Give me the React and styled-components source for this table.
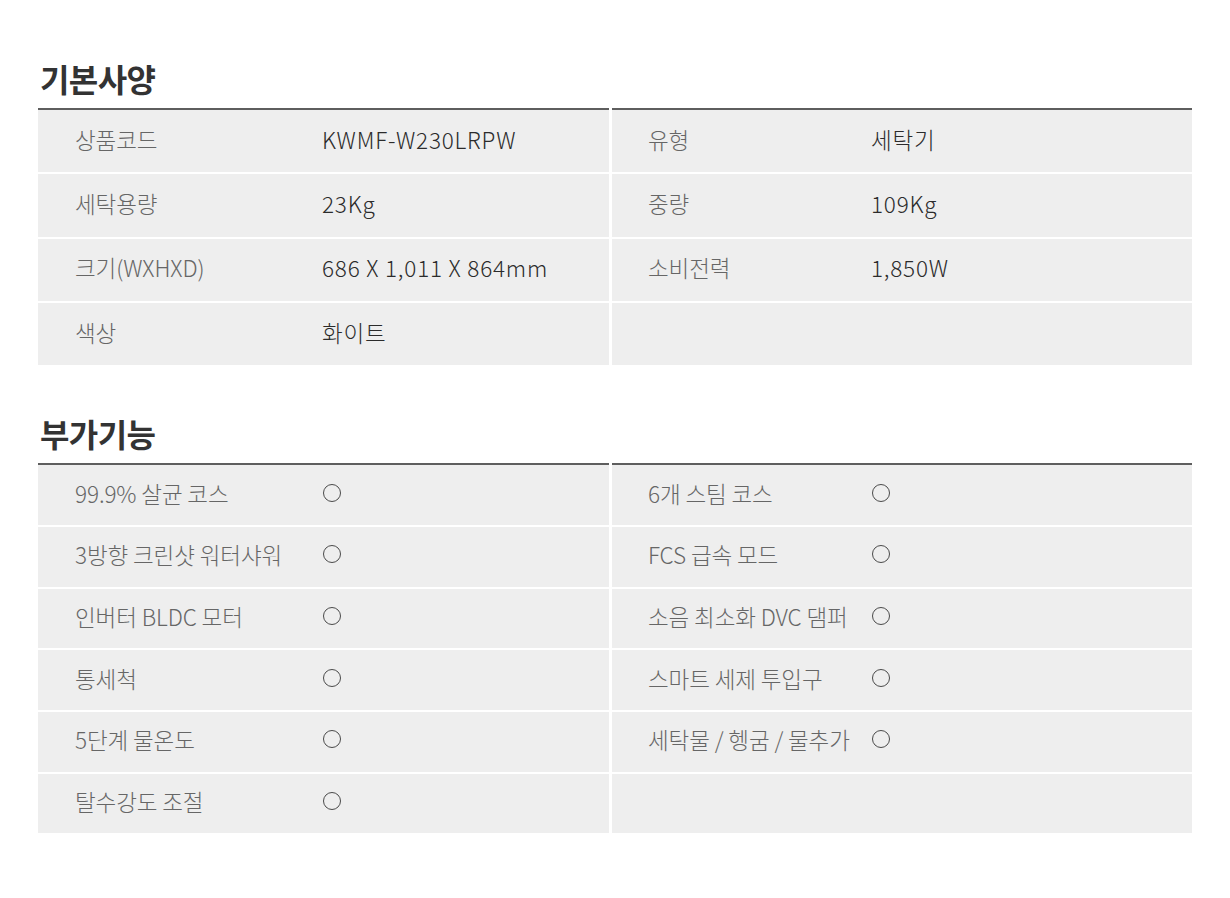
import React from "react";
import styled, { createGlobalStyle } from "styled-components";

const Global = createGlobalStyle`
  html, body { margin: 0; padding: 0; background: #ffffff; }
  body { font-family: "Noto Sans CJK KR", "Noto Sans", sans-serif; }
`;

const Page = styled.div`
  width: 1154px;
  padding: 55px 0 0 38px;
`;

const Section = styled.section`
  margin-bottom: ${(p) => p.$mb || 0}px;
`;

const Heading = styled.h2`
  margin: 0 0 0 2px;
  height: 53px;
  font-size: 32px;
  line-height: 46px;
  font-weight: 700;
  color: #333333;
  letter-spacing: -0.6px;
`;

const Grid = styled.div`
  display: grid;
  grid-template-columns: 571px 580px;
  column-gap: 3px;
`;

const Panel = styled.div`
  border-top: 2px solid #5e5e5e;
  display: flex;
  flex-direction: column;
  gap: 2px;
`;

const Row = styled.div`
  box-sizing: border-box;
  display: grid;
  grid-template-columns: ${(p) => p.$labelW}px 1fr;
  align-items: center;
  height: ${(p) => p.$h}px;
  padding-left: ${(p) => p.$pad}px;
  padding-bottom: 5px;
  background: #eeeeee;
  font-size: 22.5px;
  letter-spacing: -0.1px;
`;

const Label = styled.span`
  color: #666666;
  font-weight: 300;
  white-space: nowrap;
`;

const Value = styled.span`
  color: #2b2b2b;
  font-weight: 300;
  white-space: nowrap;
  letter-spacing: 0.8px;
`;

const Mark = styled.span`
  display: block;
  width: 16px;
  height: 16px;
  margin-left: 1px;
  border: 1.3px solid #4a4a4a;
  border-radius: 50%;
`;

const spec = {
  left: [
    ["상품코드", "KWMF-W230LRPW"],
    ["세탁용량", "23Kg"],
    ["크기(WXHXD)", "686 X 1,011 X 864mm"],
    ["색상", "화이트"],
  ],
  right: [
    ["유형", "세탁기"],
    ["중량", "109Kg"],
    ["소비전력", "1,850W"],
    ["", ""],
  ],
};

const extra = {
  left: [
    "99.9% 살균 코스",
    "3방향 크린샷 워터샤워",
    "인버터 BLDC 모터",
    "통세척",
    "5단계 물온도",
    "탈수강도 조절",
  ],
  right: [
    "6개 스팀 코스",
    "FCS 급속 모드",
    "소음 최소화 DVC 댐퍼",
    "스마트 세제 투입구",
    "세탁물 / 헹굼 / 물추가",
    "",
  ],
};

const sides = {
  left: { labelW: 247, pad: 37 },
  right: { labelW: 223, pad: 36 },
};

export default function App() {
  return (
    <>
      <Global />
      <Page>
        <Section $mb={45}>
          <Heading>기본사양</Heading>
          <Grid>
            {["left", "right"].map((side) => (
              <Panel key={side}>
                {spec[side].map(([l, v], i) => (
                  <Row key={i} $h={62.3} $labelW={sides[side].labelW} $pad={sides[side].pad}>
                    <Label>{l}</Label>
                    <Value>{v}</Value>
                  </Row>
                ))}
              </Panel>
            ))}
          </Grid>
        </Section>
        <Section>
          <Heading>부가기능</Heading>
          <Grid>
            {["left", "right"].map((side) => (
              <Panel key={side}>
                {extra[side].map((l, i) => (
                  <Row key={i} $h={59.7} $labelW={sides[side].labelW} $pad={sides[side].pad}>
                    <Label>{l}</Label>
                    <span>{l ? <Mark /> : null}</span>
                  </Row>
                ))}
              </Panel>
            ))}
          </Grid>
        </Section>
      </Page>
    </>
  );
}
